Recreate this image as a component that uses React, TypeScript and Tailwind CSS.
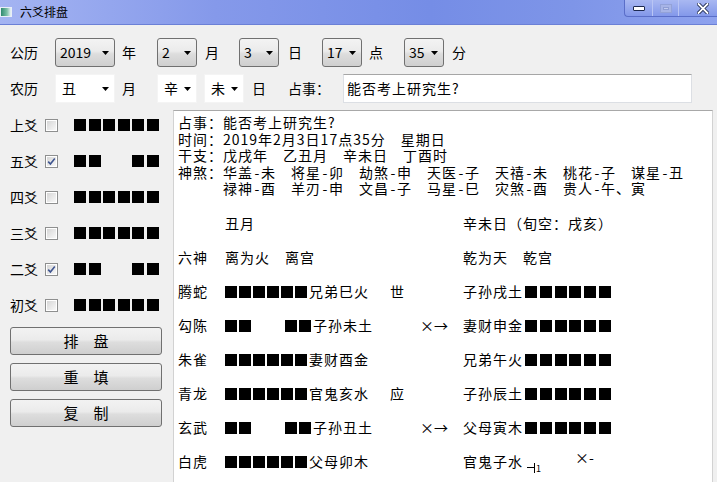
import React from "react";

const FONT = "font-['Noto_Sans_CJK_SC','Noto_Sans',sans-serif]";

function Sq({ hidden }: { hidden?: boolean }) {
  return <div className={hidden ? "w-[12px] h-[12px]" : "w-[12px] h-[12px] bg-black"} />;
}

function LeftLine({ yin }: { yin?: boolean }) {
  return (
    <div className="flex gap-[2.6px]">
      <Sq />
      <Sq />
      <Sq hidden={yin} />
      <Sq hidden={yin} />
      <Sq />
      <Sq />
    </div>
  );
}

function PanelLine({ yin }: { yin?: boolean }) {
  if (yin)
    return (
      <div className="flex gap-[2px]">
        <Sq />
        <Sq />
        <div className="w-[30px]" />
        <Sq />
        <Sq />
      </div>
    );
  return (
    <div className="flex gap-[2px]">
      <Sq />
      <Sq />
      <Sq />
      <Sq />
      <Sq />
      <Sq />
    </div>
  );
}

function RightLine() {
  return (
    <div className="flex gap-[2.8px] ml-[2px]">
      <Sq />
      <Sq />
      <Sq />
      <Sq />
      <Sq />
      <Sq />
    </div>
  );
}

function Arrow() {
  return (
    <svg width="7" height="4" viewBox="0 0 7 4" className="shrink-0">
      <path d="M0 0H7L3.5 4Z" fill="#000" />
    </svg>
  );
}

function GCombo({ value, w }: { value: string; w: string }) {
  return (
    <div
      className={`${w} h-[29px] shrink-0 flex items-center justify-between pl-[4px] pr-[5px] rounded-[3px] border border-[#707070] bg-[linear-gradient(to_bottom,#f3f3f3_0%,#ebebeb_45%,#dddddd_55%,#cfcfcf_100%)] text-[14px]`}
    >
      <span>{value}</span>
      <Arrow />
    </div>
  );
}

function WCombo({ value, w }: { value: string; w: string }) {
  return (
    <div
      className={`${w} h-[29px] shrink-0 flex items-center justify-between pl-[6px] pr-[5px] bg-white border border-[#f4f4f4] text-[14px]`}
    >
      <span>{value}</span>
      <Arrow />
    </div>
  );
}

function Check({ checked }: { checked?: boolean }) {
  return (
    <div className="w-[13px] h-[13px] shrink-0 border border-[#8e8f8f] bg-white p-[1px]">
      <div className="w-full h-full bg-[linear-gradient(135deg,#d6d6d6,#f8f8f8)] flex items-center justify-center">
        {checked && (
          <svg width="9" height="9" viewBox="0 0 9 9">
            <path d="M1.2 4.6L3.4 7L7.8 1.5" stroke="#3f5590" strokeWidth="1.6" fill="none" />
          </svg>
        )}
      </div>
    </div>
  );
}

function Btn({ label }: { label: string }) {
  return (
    <div className="w-[152px] h-[28px] flex items-center justify-center rounded-[3px] border border-[#707070] bg-[linear-gradient(to_bottom,#f2f2f2_0%,#ebebeb_45%,#dddddd_55%,#cfcfcf_100%)] text-[15px] whitespace-pre">
      {label}
    </div>
  );
}

function ShaLine({ lead, items }: { lead: string; items: string[] }) {
  return (
    <div>
      {lead}
      {items.map((it, i) => {
        const [a, b] = it.split("-");
        return (
          <React.Fragment key={it}>
            {i > 0 ? "　" : ""}
            {a}
            <span className="inline-block w-[8px] text-center tracking-normal">-</span>
            {b}
          </React.Fragment>
        );
      })}
    </div>
  );
}

const yaoRows: { name: string; checked: boolean; yin: boolean }[] = [
  { name: "上爻", checked: false, yin: false },
  { name: "五爻", checked: true, yin: true },
  { name: "四爻", checked: false, yin: false },
  { name: "三爻", checked: false, yin: false },
  { name: "二爻", checked: true, yin: true },
  { name: "初爻", checked: false, yin: false },
];

const tableRows: {
  god: string;
  yin: boolean;
  text: string;
  mark: string;
  change: string;
  right: string;
}[] = [
  { god: "腾蛇", yin: false, text: "兄弟巳火", mark: "世", change: "", right: "子孙戌土" },
  { god: "勾陈", yin: true, text: "子孙未土", mark: "", change: "×→", right: "妻财申金" },
  { god: "朱雀", yin: false, text: "妻财酉金", mark: "", change: "", right: "兄弟午火" },
  { god: "青龙", yin: false, text: "官鬼亥水", mark: "应", change: "", right: "子孙辰土" },
  { god: "玄武", yin: true, text: "子孙丑土", mark: "", change: "×→", right: "父母寅木" },
];

export default function App() {
  return (
    <div className={`${FONT} w-[717px] h-[482px] overflow-hidden bg-[#f0f0f0] text-black flex flex-col`}>
      {/* title bar */}
      <div className="h-[25px] shrink-0 flex items-start border-b border-[#6b80d6] bg-[linear-gradient(to_right,#a4b4f2,#8599ea_30%,#758de6_60%,#7e95e8_80%,#8ea2ee)]">
        <div className="h-[24px] flex items-center">
          <div className="w-[12px] h-[10px] border border-[#e8eef8] bg-[linear-gradient(to_right,#2f8a70,#7cc0a8_60%,#eef4f8)]" />
          <span className="ml-[8px] text-[12px] leading-none">六爻排盘</span>
        </div>
        <div className="ml-auto flex h-[17px] border-l border-b border-[#5a6ec8] rounded-bl-[4px] overflow-hidden bg-[linear-gradient(to_bottom,#a9b8f2,#8398ea)]">
          <div className="w-[28px] h-full flex items-center justify-center border-r border-[#b9c5f4]">
            <div className="w-[12px] h-[5px] bg-white border border-[#1e2a50] rounded-[1px]" />
          </div>
          <div className="w-[26px] h-full flex items-center justify-center border-r border-[#b9c5f4]">
            <div className="w-[12px] h-[9px] border border-[#93a2d8] bg-[#a7b4e6] flex items-center justify-center">
              <div className="w-[6px] h-[3px] bg-[#c2cbef] border border-[#8e9dd4]" />
            </div>
          </div>
          <div className="w-[38px] h-full flex items-center pl-[18px]">
            <svg width="12" height="11" viewBox="0 0 12 11">
              <path d="M1.5 1L10.5 10M10.5 1L1.5 10" stroke="#1e2a50" strokeWidth="3.6" strokeLinecap="square" />
              <path d="M1.5 1L10.5 10M10.5 1L1.5 10" stroke="#ffffff" strokeWidth="1.8" strokeLinecap="square" />
            </svg>
          </div>
        </div>
      </div>

      {/* row 1 */}
      <div className="mt-[13px] h-[29px] flex items-center pl-[10px] text-[14px] shrink-0">
        <span className="w-[45px]">公历</span>
        <GCombo value="2019" w="w-[60px]" />
        <span className="w-[42px] pl-[7px]">年</span>
        <GCombo value="2" w="w-[40px]" />
        <span className="w-[42px] pl-[8px]">月</span>
        <GCombo value="3" w="w-[40px]" />
        <span className="w-[43px] pl-[9px]">日</span>
        <GCombo value="17" w="w-[40px]" />
        <span className="w-[42px] pl-[7px]">点</span>
        <GCombo value="35" w="w-[40px]" />
        <span className="pl-[8px]">分</span>
      </div>

      {/* row 2 */}
      <div className="mt-[7px] h-[29px] flex items-center pl-[10px] text-[14px] shrink-0">
        <span className="w-[45px]">农历</span>
        <WCombo value="丑" w="w-[60px]" />
        <span className="w-[42px] pl-[7px]">月</span>
        <WCombo value="辛" w="w-[40px]" />
        <div className="ml-[7px]">
          <WCombo value="未" w="w-[40px]" />
        </div>
        <span className="ml-[8px]">日</span>
        <span className="ml-[22px]">占事：</span>
        <div className="ml-[13px] w-[349px] h-[29px] bg-white border border-[#dcdfe4] border-t-[#a6a6a6] flex items-center pl-[3px] text-[14px] tracking-[1px]">
          能否考上研究生?
        </div>
      </div>

      {/* main */}
      <div className="mt-[4px] flex flex-1 min-h-0">
        {/* left column */}
        <div className="w-[173px] shrink-0 flex flex-col">
          {yaoRows.map((r) => (
            <div key={r.name} className="h-[36px] flex items-center pl-[10px]">
              <span className="w-[35px] text-[14px]">{r.name}</span>
              <Check checked={r.checked} />
              <div className="ml-[16px]">
                <LeftLine yin={r.yin} />
              </div>
            </div>
          ))}
          <div className="mt-[4px] ml-[10px] flex flex-col gap-[8px]">
            <Btn label="排　盘" />
            <Btn label="重　填" />
            <Btn label="复　制" />
          </div>
        </div>

        {/* panel */}
        <div className="mt-[3px] w-[540px] bg-white border-t border-l border-r border-[#d2d2d2] border-t-[#a8a8a8] pl-[4px] pt-[3px] text-[14px] tracking-[1px]">
          <div className="leading-[16.5px] whitespace-pre">
            <div>占事：能否考上研究生?</div>
            <div>时间：2019年2月3日17点35分　星期日</div>
            <div>干支：戊戌年　乙丑月　辛未日　丁酉时</div>
            <ShaLine
              lead="神煞："
              items={["华盖-未", "将星-卯", "劫煞-申", "天医-子", "天禧-未", "桃花-子", "谋星-丑"]}
            />
            <ShaLine
              lead="　　　"
              items={["禄神-酉", "羊刃-申", "文昌-子", "马星-巳", "灾煞-酉", "贵人-午、寅"]}
            />
          </div>
          <div className="mt-[10px] flex flex-col whitespace-pre">
            <div className="h-[34px] flex items-center">
              <div className="w-[47px]" />
              <div className="w-[238px]">丑月</div>
              <div>辛未日（旬空：戌亥）</div>
            </div>
            <div className="h-[34px] flex items-center">
              <div className="w-[47px]">六神</div>
              <div className="w-[238px]">离为火　离宫</div>
              <div>乾为天　乾宫</div>
            </div>
            {tableRows.map((r) => (
              <div key={r.god} className="h-[34px] flex items-center">
                <div className="w-[47px]">{r.god}</div>
                <div className="w-[160px] flex items-center">
                  <PanelLine yin={r.yin} />
                  <span className="ml-[2px]">{r.text}</span>
                </div>
                <div className="w-[35px] pl-[5px]">{r.mark}</div>
                <div className="w-[43px] text-[14px] tracking-normal">{r.change}</div>
                <div className="flex items-center">
                  <span>{r.right}</span>
                  <RightLine />
                </div>
              </div>
            ))}
            <div className="h-[34px] flex items-center">
              <div className="w-[47px]">白虎</div>
              <div className="w-[160px] flex items-center">
                <PanelLine />
                <span className="ml-[2px]">父母卯木</span>
              </div>
              <div className="w-[35px]" />
              <div className="w-[43px]" />
              <div className="flex items-center">
                <span>官鬼子水</span>
                <div className="ml-[4px] mt-[12px] flex items-end">
                  <div className="w-[8px] h-[10px] border-r border-black flex items-center">
                    <div className="w-full h-[1px] bg-black" />
                  </div>
                  <span className="ml-[1px] text-[9px] leading-none tracking-normal">1</span>
                </div>
                <span className="ml-[34px] -mt-[8px] text-[14px] tracking-normal">×-</span>
              </div>
            </div>
          </div>
        </div>
      </div>
    </div>
  );
}
